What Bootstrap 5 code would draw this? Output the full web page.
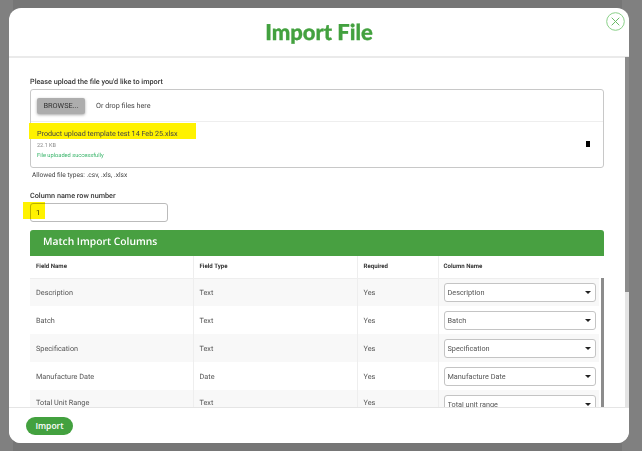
<!DOCTYPE html>
<html lang="en">
<head>
<meta charset="utf-8">
<title>Import File</title>
<link href="https://cdn.jsdelivr.net/npm/bootstrap@5.3.0/dist/css/bootstrap.min.css" rel="stylesheet">
<style>
html,body{height:100%;overflow:hidden}
body{font-family:Roboto,"Liberation Sans",sans-serif;text-rendering:geometricPrecision;background:linear-gradient(90deg,#808080 13px,#767676 13px,#767676 622px,#808080 622px);color:#444;padding:8px 13px 8px 9px}
.imp-modal{height:435px;width:620px;border:0;border-radius:12px;overflow:hidden;background:#fff;position:relative}
.imp-head{height:50px;flex:none;border-bottom:2px solid #eaeaea;padding:0;justify-content:center;position:relative}
.imp-title{font-family:Lato,"Open Sans",sans-serif;font-weight:900;font-size:22px;color:#43a13f;margin:0;line-height:1;-webkit-text-stroke:.3px #43a13f}
.imp-close{position:absolute;top:4px;right:4px;width:19px;height:19px;padding:0;border:0;background:none;line-height:0}
.imp-body{flex:1 1 auto;min-height:0;overflow:hidden;padding:19px 25px 0 21px}
.bar-track{position:absolute;background:#e4e4e4}
.bar-thumb{display:block;width:100%;background:#8c8c8c}
.page-track{right:0;top:49px;bottom:36px;width:4px}
.page-thumb{height:235px}
.imp-foot{height:36px;flex:none;border-top:1px solid #e5e5e5;padding:0 0 0 17px;justify-content:flex-start;background:#fff;position:relative;z-index:1}
.imp-label{font-size:7.25px;font-weight:500;color:#333;line-height:10px;margin-bottom:2px}
.drop-box{border:1px solid #c8c8c8;border-radius:3px;height:79px;font-size:7.2px}
.drop-top{height:32px;flex:none;border-bottom:1px solid #eee;padding-left:6px;gap:11px}
.drop-hint{padding-top:1px}
.btn-browse{background:#adadad;color:#333;font-size:7.4px;line-height:10px;padding:3px 0;width:48px;height:16px;border:0;border-radius:2px;box-shadow:0 1px 3px rgba(0,0,0,.35)}
.drop-file{flex:1;padding:0 13px 0 6px;position:relative}
.file-name{font-size:7.2px;color:#444;background:#fff200;line-height:11px;display:inline-block;padding:5px 18px 0 8px;margin-left:-8px;margin-top:1px;vertical-align:top}
.file-size{font-size:5.5px;color:#888;line-height:8px;margin-top:3px}
.file-ok{font-size:5.7px;color:#3ab56b;line-height:8px;margin-top:2px}
.file-mark{position:absolute;right:13px;top:19px;width:4px;height:6px;background:#000}
.allowed{font-size:6.6px;color:#444;line-height:8px;margin:3px 0 12px 2px}
.row-wrap{position:relative;width:138px;margin-bottom:8px}
.row-input{height:19px;border:1px solid #bbb;border-radius:3px;font-size:7.5px;padding:0 5px;color:#444;min-height:0}
.row-hl{position:absolute;left:-7px;top:-1px;width:22px;height:17px;background:#fff200;mix-blend-mode:multiply}
.match-head{background:#48a041;color:#fff;height:26px;border-radius:3px 3px 0 0;font-family:"Open Sans",sans-serif;font-weight:600;font-size:10.3px;padding-left:13px;display:flex;align-items:center}
.match-wrap{position:relative}
.table-scroll{height:151px;overflow:hidden}
.inner-track{right:0;top:22px;bottom:0;width:3px;background:#eee}
.inner-thumb{height:100%}
.imp-table{table-layout:fixed;width:569px;margin:0;font-size:7.3px;color:#555;border-collapse:collapse}
.imp-table th,.imp-table td{padding:0 6px;vertical-align:middle;border:0;border-right:1px solid #eee;box-shadow:none;background:none}
.imp-table td{padding-top:2px}
.imp-table th:last-child,.imp-table td:last-child{border-right:0;padding-left:5px;padding-top:0}
.imp-table th{height:22px;font-size:6.1px;font-weight:700;color:#333;border-bottom:1px solid #eee;background:#fff}
.imp-table td{height:28px}
.imp-table tbody tr:nth-child(odd) td{background:#f8f8f8}
.imp-table tbody tr:last-child td:not(:last-child){vertical-align:top;padding-top:9px;line-height:8px}
.sel-box{height:19px;width:152px;border:1px solid #c4c4c4;border-radius:3px;font-size:7.3px;padding:0 15px 0 3px;color:#555;line-height:17px;min-height:0;background-size:0;background-color:#fff;box-shadow:none}
.sel-wrap{position:relative;width:152px}
.sel-wrap::after{content:"";position:absolute;right:5px;top:8px;border:3px solid transparent;border-top-color:#222;border-bottom:0}
.btn-import{background:#43a13f;color:#fff;font-family:"Open Sans",sans-serif;font-size:8.5px;font-weight:600;border-radius:10px;height:18px;width:47px;padding:0;border:0;line-height:18px;margin:0}
</style>
</head>
<body>
<div class="modal-content imp-modal d-flex flex-column">
  <div class="modal-header imp-head">
    <h1 class="imp-title">Import File</h1>
    <button class="imp-close" type="button" aria-label="Close">
      <svg width="19" height="19" viewBox="0 0 19 19" fill="none" stroke="#8ad088"><circle cx="9.5" cy="9.5" r="8.8"/><path d="M5.7 5.7l7.6 7.6M13.3 5.7l-7.6 7.6" stroke="#6abc67"/></svg>
    </button>
  </div>
  <div class="modal-body imp-body">
    <div class="imp-label">Please upload the file you'd like to import</div>
    <div class="drop-box d-flex flex-column">
      <div class="drop-top d-flex align-items-center">
        <button class="btn btn-browse" type="button">BROWSE...</button>
        <span class="drop-hint">Or drop files here</span>
      </div>
      <div class="drop-file">
        <div><span class="file-name">Product upload template test 14 Feb 25.xlsx</span></div>
        <div class="file-size">22.1 KB</div>
        <div class="file-ok">File uploaded successfully</div>
        <span class="file-mark"></span>
      </div>
    </div>
    <div class="allowed">Allowed file types: .csv, .xls, .xlsx</div>
    <div class="imp-label">Column name row number</div>
    <div class="row-wrap">
      <input class="form-control row-input" type="text" value="1" aria-label="Column name row number">
      <span class="row-hl"></span>
    </div>
    <div class="match-head">Match Import Columns</div>
    <div class="match-wrap">
      <div class="table-scroll">
        <table class="table imp-table">
          <colgroup><col style="width:163px"><col style="width:164px"><col style="width:81px"><col></colgroup>
          <thead><tr><th>Field Name</th><th>Field Type</th><th>Required</th><th>Column Name</th></tr></thead>
          <tbody>
            <tr><td>Description</td><td>Text</td><td>Yes</td><td><div class="sel-wrap"><select class="form-select sel-box" aria-label="Description"><option>Description</option></select></div></td></tr>
            <tr><td>Batch</td><td>Text</td><td>Yes</td><td><div class="sel-wrap"><select class="form-select sel-box" aria-label="Batch"><option>Batch</option></select></div></td></tr>
            <tr><td>Specification</td><td>Text</td><td>Yes</td><td><div class="sel-wrap"><select class="form-select sel-box" aria-label="Specification"><option>Specification</option></select></div></td></tr>
            <tr><td>Manufacture Date</td><td>Date</td><td>Yes</td><td><div class="sel-wrap"><select class="form-select sel-box" aria-label="Manufacture Date"><option>Manufacture Date</option></select></div></td></tr>
            <tr><td>Total Unit Range</td><td>Text</td><td>Yes</td><td><div class="sel-wrap"><select class="form-select sel-box" aria-label="Total unit range"><option>Total unit range</option></select></div></td></tr>
          </tbody>
        </table>
      </div>
      <div class="bar-track inner-track"><span class="bar-thumb inner-thumb"></span></div>
    </div>
  </div>
  <div class="bar-track page-track"><span class="bar-thumb page-thumb"></span></div>
  <div class="modal-footer imp-foot">
    <button class="btn btn-import" type="button">Import</button>
  </div>
</div>
<script src="https://cdn.jsdelivr.net/npm/bootstrap@5.3.0/dist/js/bootstrap.bundle.min.js"></script>
</body>
</html>
